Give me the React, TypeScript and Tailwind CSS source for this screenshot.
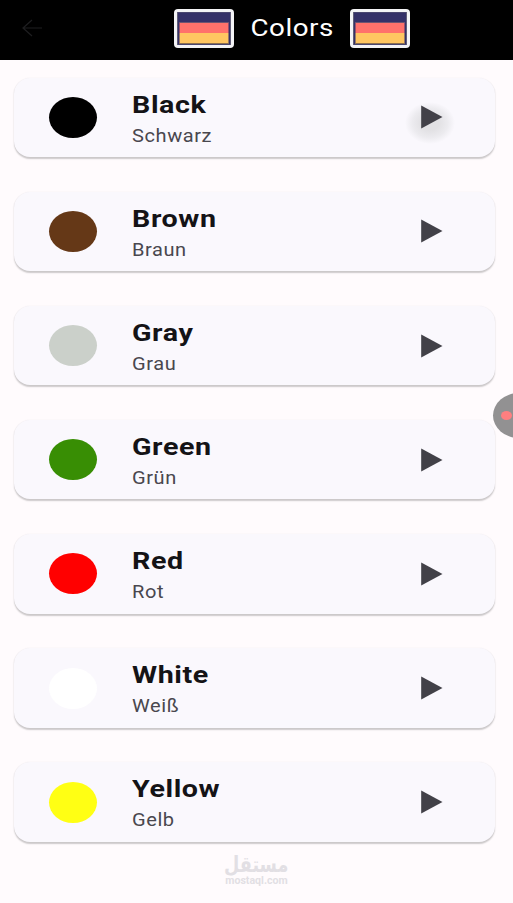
const colors = [
  { name: 'Black', german: 'Schwarz', swatch: 'bg-black' },
  { name: 'Brown', german: 'Braun', swatch: 'bg-[#653817]' },
  { name: 'Gray', german: 'Grau', swatch: 'bg-[#cbd0ca]' },
  { name: 'Green', german: 'Grün', swatch: 'bg-[#388e04]' },
  { name: 'Red', german: 'Rot', swatch: 'bg-[#ff0000]' },
  { name: 'White', german: 'Weiß', swatch: 'bg-white' },
  { name: 'Yellow', german: 'Gelb', swatch: 'bg-[#ffff14]' },
];

function Flag() {
  return (
    <svg className="h-[39px] w-[60px] shrink-0" viewBox="0 0 60 39">
      <rect x="0" y="0" width="60" height="39" rx="4" fill="#f4f4f6" />
      <rect x="3" y="3" width="54" height="33" fill="#615e78" />
      <rect x="4" y="3.5" width="52" height="32" fill="#343168" />
      <rect x="5" y="13" width="50" height="1" fill="#6e5470" />
      <rect x="5.5" y="14" width="49" height="10" fill="#ff716b" />
      <rect x="5.5" y="24" width="49" height="10" fill="#ffc661" />
      <rect x="5" y="34" width="50" height="1" fill="#8c7050" />
    </svg>
  );
}

function ColorCard({ name, german, swatch, pressed }: { name: string; german: string; swatch: string; pressed: boolean }) {
  return (
    <li className="flex h-[79.5px] w-[481px] shrink-0 items-center rounded-[16px] bg-[#faf8fd] pl-[35px] shadow-[0_1.5px_1.5px_rgba(0,0,0,0.2),0_0_1.5px_rgba(0,0,0,0.05)]">
      <span className={`h-[41px] w-[48px] shrink-0 rounded-[50%] ${swatch}`} />
      <div className="ml-[35px] w-[289px] pt-[4.6px] whitespace-nowrap">
        <div className="origin-left scale-x-[1.17] text-[24.5px] leading-[32px] font-bold tracking-[0.5px] text-[#141316]">{name}</div>
        <div className="origin-left scale-x-[1.145] text-[17.5px] leading-[30px] tracking-[0.5px] text-[#49474e]">{german}</div>
      </div>
      <div className="relative flex items-center">
        {pressed && (
          <span className="absolute top-[-3px] left-[-16px] h-[42px] w-[50px] rounded-[50%] bg-[radial-gradient(closest-side,#e2e1e4_35%,#ecebef_70%,transparent)]" />
        )}
        <svg className="relative h-6 w-[22px]" viewBox="0 0 22 24">
          <path d="M.2 .5 21.5 12 .2 23.5Z" fill="#424148" />
        </svg>
      </div>
    </li>
  );
}

export default function App() {
  return (
    <main className="relative flex h-[903px] w-[513px] flex-col overflow-hidden bg-[#fffbfd] font-[Roboto,sans-serif]">
      <header className="flex h-[60px] shrink-0 items-center bg-black pl-[22px]">
        <svg className="mb-1 h-[18px] w-[21px]" viewBox="0 0 21 18" fill="none" stroke="#1e1e20" strokeWidth="1.2">
          <path d="M20 9H1M10 1 1 9l9 8" />
        </svg>
        <div className="mb-1 ml-[131px] flex items-center">
          <Flag />
          <h1 className="flex w-[116px] justify-center text-[24px] leading-8 font-normal text-white">
            <span className="scale-x-[1.155] tracking-[0.5px]">Colors</span>
          </h1>
          <Flag />
        </div>
      </header>
      <ul className="flex flex-col gap-[34.67px] pt-[17.5px] pl-[14px]">
        {colors.map((color, index) => (
          <ColorCard key={color.name} {...color} pressed={index === 0} />
        ))}
      </ul>
      <footer className="mt-[12px] flex flex-col items-center text-[#e2dfe4]">
        <div dir="rtl" className="h-[22px] scale-x-[0.8] font-['DejaVu_Sans',sans-serif] text-[22px] leading-[22px] font-bold">مستقل</div>
        <div className="h-[10px] scale-x-[1.06] text-[10px] leading-[10px] font-bold">mostaql.com</div>
      </footer>
      <div className="absolute top-[393px] left-[493px] flex h-[45px] w-[52px] items-center rounded-[50%] bg-[#929192] pl-[8px]">
        <span className="h-[9px] w-[11px] rounded-[50%] bg-[#ff7f80]" />
      </div>
    </main>
  );
}
